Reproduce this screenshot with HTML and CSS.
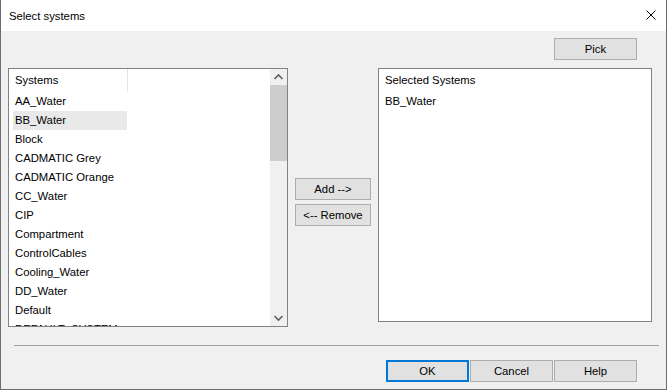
FILE: index.html
```html
<!DOCTYPE html>
<html lang="en">

<head>
	<meta charset="UTF-8">
	<title>Select systems</title>
	<link rel="stylesheet" href="styles.css">
</head>

<body>
	<div class="window">
		<div class="titlebar">
			<span class="title">Select systems</span>
			<svg class="close" width="10" height="10" viewBox="0 0 10 10">
				<path d="M0.5 0.5 L9.5 9.5 M9.5 0.5 L0.5 9.5" stroke="#000" stroke-width="1" fill="none" />
			</svg>
		</div>

		<div class="client">
			<div class="pick-row">
				<button class="btn">Pick</button>
			</div>

			<div class="main-row">
				<div class="listview systems">
					<div class="lv-body">
						<div class="lv-header"><span class="col">Systems</span></div>
						<ul class="items">
							<li>AA_Water</li>
							<li class="selected">BB_Water</li>
							<li>Block</li>
							<li>CADMATIC Grey</li>
							<li>CADMATIC Orange</li>
							<li>CC_Water</li>
							<li>CIP</li>
							<li>Compartment</li>
							<li>ControlCables</li>
							<li>Cooling_Water</li>
							<li>DD_Water</li>
							<li>Default</li>
							<li>DEFAULT_SYSTEM</li>
						</ul>
					</div>
					<div class="scrollbar">
						<div class="sb-arrow">
							<svg width="17" height="16" viewBox="0 0 17 16">
								<polyline points="4.5,10 8.5,6 12.5,10" stroke="#606060" stroke-width="1.6" fill="none" />
							</svg>
						</div>
						<div class="sb-thumb"></div>
						<div class="sb-track"></div>
						<div class="sb-arrow">
							<svg width="17" height="16" viewBox="0 0 17 16">
								<polyline points="4.5,6 8.5,10 12.5,6" stroke="#606060" stroke-width="1.6" fill="none" />
							</svg>
						</div>
					</div>
				</div>

				<div class="transfer">
					<button class="btn wide">Add --&gt;</button>
					<button class="btn wide">&lt;-- Remove</button>
				</div>

				<div class="listview selected-box">
					<div class="lv-body">
						<div class="lv-header"><span class="col">Selected Systems</span></div>
						<ul class="items">
							<li>BB_Water</li>
						</ul>
					</div>
				</div>
			</div>

			<div class="separator"></div>

			<div class="footer">
				<button class="btn default">OK</button>
				<button class="btn">Cancel</button>
				<button class="btn">Help</button>
			</div>
		</div>
	</div>
</body>

</html>
```

FILE: styles.css
```css
* {
	box-sizing: border-box;
}

html,
body {
	margin: 0;
	padding: 0;
}

body {
	width: 667px;
	height: 390px;
	overflow: hidden;
	font-family: "Liberation Sans", Arial, sans-serif;
	font-size: 11.3px;
	color: #000;
}

.window {
	height: 390px;
	border: 1px solid #6d6d6d;
	border-top: none;
	background-color: #f0f0f0;
	display: flex;
	flex-direction: column;
}

.titlebar {
	height: 31px;
	background-color: #fff;
	display: flex;
	align-items: center;
	justify-content: space-between;
	padding: 0 10px 0 8px;
}

.title {
	font-size: 11.3px;
	line-height: 13px;
	padding-top: 1px;
}

.close {
	display: block;
	margin-top: -1px;
}

/* buttons */
.btn {
	width: 83px;
	height: 22px;
	padding: 0;
	margin: 0;
	background-color: #e1e1e1;
	border: 1px solid #adadad;
	font-family: inherit;
	font-size: inherit;
	color: #000;
	line-height: 18px;
}

.btn.wide {
	width: 76px;
}

.btn.default {
	border: 2px solid #0078d7;
}

.pick-row {
	display: flex;
	justify-content: flex-end;
	padding: 7px 29px 0 0;
}

.main-row {
	display: flex;
	align-items: flex-start;
	gap: 7px;
	margin-top: 8px;
	padding-left: 7px;
}

/* list views */
.listview {
	display: flex;
	border: 1px solid #828282;
	background-color: #fff;
	overflow: hidden;
}

.systems {
	width: 280px;
	height: 259px;
}

.selected-box {
	width: 274px;
	height: 254px;
}

.lv-body {
	flex: 1;
	overflow: hidden;
}

.lv-header {
	height: 23px;
	display: flex;
}

.lv-header .col {
	line-height: 23px;
	padding-left: 6px;
}

.systems .lv-header .col {
	width: 119px;
	border-right: 1px solid #e5e5e5;
}

.items {
	list-style: none;
	margin: 0;
	padding: 0;
}

.items li {
	height: 19px;
	line-height: 19px;
	margin-left: 4px;
	padding-left: 2px;
	white-space: nowrap;
}

.systems .items li {
	width: 114px;
}

.items li.selected {
	background-color: #e9e9e9;
}

/* scrollbar */
.scrollbar {
	width: 17px;
	height: 100%;
	background-color: #f0f0f0;
	display: flex;
	flex-direction: column;
}

.sb-arrow {
	height: 16px;
}

.sb-arrow svg {
	display: block;
}

.sb-thumb {
	height: 76px;
	background-color: #cdcdcd;
}

.sb-track {
	flex: 1;
}

.transfer {
	display: flex;
	flex-direction: column;
	gap: 4px;
	padding-top: 110px;
}

.separator {
	height: 1px;
	width: 645px;
	margin: 18px 0 0 13px;
	background-color: #a0a0a0;
}

.footer {
	display: flex;
	justify-content: flex-end;
	gap: 1px;
	margin-top: 14px;
	padding-right: 29px;
}
```
